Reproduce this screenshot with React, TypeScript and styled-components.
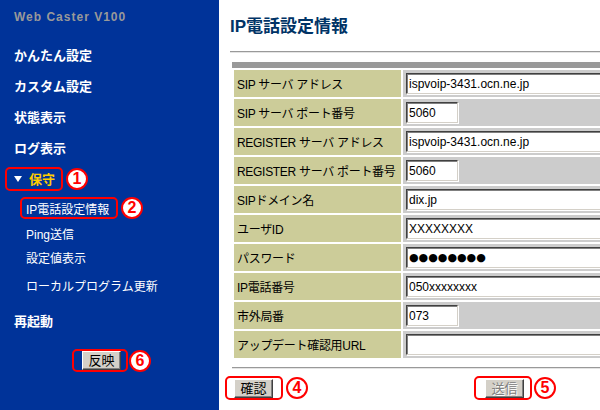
import { Fragment } from 'react';
import styled, { createGlobalStyle } from 'styled-components';

const GlobalStyle = createGlobalStyle`
  html, body {
    margin: 0;
    padding: 0;
    background: #fff;
  }
  body {
    font-family: "Liberation Sans", "Noto Sans CJK JP", sans-serif;
  }
`;

const Page = styled.div`
  display: flex;
  width: 600px;
  height: 410px;
  overflow: hidden;
`;

/* ---- left menu ---- */

const Sidebar = styled.nav`
  width: 219px;
  flex: none;
  box-sizing: border-box;
  padding: 9px 0 0 14px;
  background: #003399;
  color: #fff;
`;

const Brand = styled.div`
  height: 16px;
  margin-bottom: 14px;
  font: bold 12px/16px "Liberation Sans", sans-serif;
  letter-spacing: 1px;
  color: #999;
`;

const MenuItem = styled.div<{ $h: number; $sub?: boolean }>`
  display: flex;
  align-items: center;
  height: ${(p) => p.$h}px;
  padding-left: ${(p) => (p.$sub ? 12 : 0)}px;
  font-size: ${(p) => (p.$sub ? 12 : 13)}px;
  font-weight: ${(p) => (p.$sub ? 'normal' : 'bold')};
  color: #fff;
  white-space: nowrap;
`;

const Current = styled.span`
  color: #ffcc00;
`;

const Arrow = styled.span`
  width: 0;
  height: 0;
  border-left: 4px solid transparent;
  border-right: 4px solid transparent;
  border-top: 6px solid #fff;
`;

// red annotation frame drawn over the screenshot
const Mark = styled.span<{ $w: number; $h: number; $pad: string; $shift?: number }>`
  display: inline-flex;
  align-items: center;
  gap: 7px;
  box-sizing: border-box;
  width: ${(p) => p.$w}px;
  height: ${(p) => p.$h}px;
  margin-left: ${(p) => p.$shift ?? 0}px;
  padding: ${(p) => p.$pad};
  border: 2px solid #ff0000;
  border-radius: 5px;
`;

const Badge = styled.span<{ $gap: number }>`
  display: inline-flex;
  align-items: center;
  justify-content: center;
  flex: none;
  box-sizing: border-box;
  width: 22px;
  height: 22px;
  margin-left: ${(p) => p.$gap}px;
  border: 2px solid #ff0000;
  border-radius: 50%;
  background: #fff;
  color: #ff0000;
  font: bold 16px/1 "Liberation Sans", sans-serif;
`;

const SideActions = styled.div`
  display: flex;
  align-items: center;
  margin: 9px 0 0 58px;
`;

/* ---- main panel ---- */

const Main = styled.main`
  flex: 1;
  min-width: 0;
  overflow: hidden;
  padding-left: 11px;
`;

const Heading = styled.h1`
  margin: 15px 0 0;
  height: 24px;
  line-height: 24px;
  font-size: 17px;
  font-weight: bold;
  color: #003366;
  white-space: nowrap;
`;

const Rule = styled.div<{ $top: number; $left?: number }>`
  width: 420px;
  margin: ${(p) => p.$top}px 0 0 ${(p) => p.$left ?? 0}px;
  border-top: 1px solid #999;
  border-bottom: 1px solid #e4e4e4;
`;

const Band = styled.div`
  width: 420px;
  height: 6px;
  margin: 9px 0 0 2px;
  background: #999;
`;

const Table = styled.div`
  display: grid;
  grid-template-columns: 167px 260px;
  grid-auto-rows: 27px;
  gap: 2px;
  margin: 2px 0 0 4px;
`;

const Label = styled.div`
  display: flex;
  align-items: center;
  padding-left: 3px;
  overflow: hidden;
  background: #cccc99;
  color: #000;
  font-size: 12px;
  letter-spacing: -0.3px;
  white-space: nowrap;
`;

const Value = styled.div`
  display: flex;
  align-items: center;
  padding-left: 3px;
  background: #cccccc;
`;

const Field = styled.input<{ $short?: boolean; $dots?: boolean }>`
  box-sizing: border-box;
  width: ${(p) => (p.$short ? 52 : 250)}px;
  height: 21px;
  padding: 0 2px;
  border: 1px solid;
  border-color: #404040 #d4d0c8 #d4d0c8 #404040;
  box-shadow: inset 1px 1px #808080, 1px 1px #fff;
  background: #fff;
  color: #000;
  font: ${(p) => (p.$dots ? '11px "DejaVu Sans"' : '12px "Liberation Sans"')}, sans-serif;
  outline: none;
`;

const Actions = styled.div`
  display: flex;
  align-items: center;
  margin: 7px 0 0 -5px;
`;

const Spacer = styled.div<{ $w: number }>`
  width: ${(p) => p.$w}px;
  flex: none;
`;

const Button = styled.button<{ $off?: boolean }>`
  width: 39px;
  height: 19px;
  padding: 0;
  border: 1px solid;
  border-color: #fff #404040 #404040 #fff;
  box-shadow: inset -1px -1px #808080;
  background: #d4d0c8;
  color: ${(p) => (p.$off ? '#808080' : '#000')};
  text-shadow: ${(p) => (p.$off ? '1px 1px #fff' : 'none')};
  font: 13px/1 "Liberation Sans", "Noto Sans CJK JP", sans-serif;
`;

const rows: { label: string; value: string; short?: boolean; dots?: boolean }[] = [
  { label: 'SIP サーバ アドレス', value: 'ispvoip-3431.ocn.ne.jp' },
  { label: 'SIP サーバ ポート番号', value: '5060', short: true },
  { label: 'REGISTER サーバ アドレス', value: 'ispvoip-3431.ocn.ne.jp' },
  { label: 'REGISTER サーバ ポート番号', value: '5060', short: true },
  { label: 'SIPドメイン名', value: 'dix.jp' },
  { label: 'ユーザID', value: 'XXXXXXXX' },
  { label: 'パスワード', value: '●●●●●●●●', dots: true },
  { label: 'IP電話番号', value: '050xxxxxxxx' },
  { label: '市外局番', value: '073', short: true },
  { label: 'アップデート確認用URL', value: '' },
];

const App = () => {
  return (
    <>
      <GlobalStyle />
      <Page>
        <Sidebar>
          <Brand>Web Caster V100</Brand>
          <MenuItem $h={31}>かんたん設定</MenuItem>
          <MenuItem $h={31}>カスタム設定</MenuItem>
          <MenuItem $h={31}>状態表示</MenuItem>
          <MenuItem $h={31}>ログ表示</MenuItem>
          <MenuItem $h={31}>
            <Mark $w={58} $h={24} $pad="0 7px" $shift={-9}>
              <Arrow />
              <Current>保守</Current>
            </Mark>
            <Badge $gap={3}>1</Badge>
          </MenuItem>
          <MenuItem $h={28} $sub>
            <Mark $w={98} $h={22} $pad="0 4px" $shift={-6}>
              IP電話設定情報
            </Mark>
            <Badge $gap={3}>2</Badge>
          </MenuItem>
          <MenuItem $h={22} $sub>Ping送信</MenuItem>
          <MenuItem $h={26} $sub>設定値表示</MenuItem>
          <MenuItem $h={30} $sub>ローカルプログラム更新</MenuItem>
          <MenuItem $h={40}>再起動</MenuItem>
          <SideActions>
            <Mark $w={56} $h={23} $pad="0 0 0 8px">
              <Button type="button">反映</Button>
            </Mark>
            <Badge $gap={1}>6</Badge>
          </SideActions>
        </Sidebar>

        <Main>
          <Heading>IP電話設定情報</Heading>
          <Rule $top={12} />
          <Band />
          <Table>
            {rows.map((r) => (
              <Fragment key={r.label}>
                <Label>{r.label}</Label>
                <Value>
                  <Field readOnly type="text" defaultValue={r.value} $short={r.short} $dots={r.dots} />
                </Value>
              </Fragment>
            ))}
          </Table>
          <Rule $top={9} $left={2} />
          <Actions>
            <Mark $w={58} $h={24} $pad="0 0 0 7px">
              <Button type="button">確認</Button>
            </Mark>
            <Badge $gap={3}>4</Badge>
            <Spacer $w={166} />
            <Mark $w={58} $h={24} $pad="0 0 0 9px">
              <Button type="button" $off disabled>
                送信
              </Button>
            </Mark>
            <Badge $gap={2}>5</Badge>
          </Actions>
        </Main>
      </Page>
    </>
  );
};

export default App;
